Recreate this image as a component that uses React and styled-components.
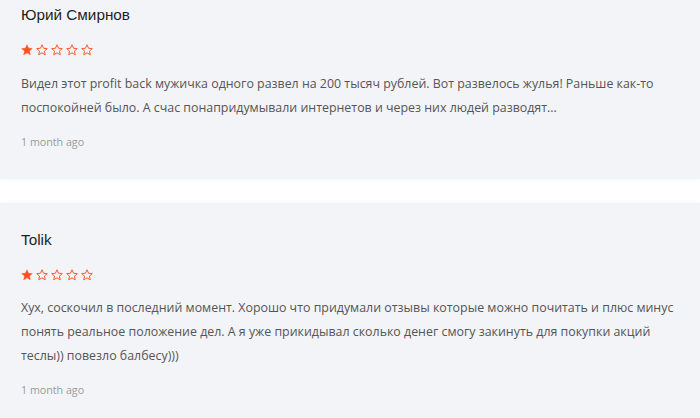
import React from "react";
import styled, { createGlobalStyle } from "styled-components";

const GlobalStyle = createGlobalStyle`
  html, body {
    margin: 0;
    padding: 0;
    background: #ffffff;
  }
  body {
    overflow: hidden;
  }
`;

const List = styled.div`
  display: flex;
  flex-direction: column;
  gap: 24px;
  margin-top: -22px;
`;

const Card = styled.article`
  background: #f3f4f8;
  box-shadow: 0 0 6px rgba(0, 0, 0, 0.05);
  padding: 25px 21px 29px;
  display: flex;
  flex-direction: column;
`;

const Name = styled.h3`
  margin: 0;
  font-family: "Liberation Sans", Arial, sans-serif;
  font-weight: 400;
  font-size: 15.3px;
  line-height: 24px;
  color: #1f1f1f;
`;

const Stars = styled.div`
  display: flex;
  gap: 3px;
  margin-top: 17px;
  height: 12px;
`;

const Text = styled.p`
  margin: 15.5px 0 0;
  font-family: "Open Sans", sans-serif;
  font-size: 12.4px;
  line-height: 24px;
  color: #555555;
`;

const Time = styled.span`
  margin-top: 14px;
  font-family: "Open Sans", sans-serif;
  font-size: 10.7px;
  line-height: 16px;
  color: #9a9a9a;
`;

const Star = ({ filled }) => (
  <svg width="12" height="12" viewBox="0 0 24 24">
    <path
      d="M12 1.5l3.1 7 7.5.7-5.7 5 1.7 7.4L12 17.7l-6.6 3.9 1.7-7.4-5.7-5 7.5-.7z"
      fill={filled ? "#ff4f1f" : "none"}
      stroke="#ff5a2c"
      strokeWidth={filled ? 1 : 2}
      strokeLinejoin="round"
    />
  </svg>
);

const Rating = ({ value }) => (
  <Stars>
    {[1, 2, 3, 4, 5].map((i) => (
      <Star key={i} filled={i <= value} />
    ))}
  </Stars>
);

const reviews = [
  {
    name: "Юрий Смирнов",
    rating: 1,
    text: "Видел этот profit back мужичка одного развел на 200 тысяч рублей. Вот развелось жулья! Раньше как-то поспокойней было. А счас понапридумывали интернетов и через них людей разводят...",
    time: "1 month ago",
  },
  {
    name: "Tolik",
    rating: 1,
    text: "Хух, соскочил в последний момент. Хорошо что придумали отзывы которые можно почитать и плюс минус понять реальное положение дел. А я уже прикидывал сколько денег смогу закинуть для покупки акций теслы)) повезло балбесу)))",
    time: "1 month ago",
  },
];

const App = () => (
  <>
    <GlobalStyle />
    <List>
      {reviews.map((r) => (
        <Card key={r.name}>
          <Name>{r.name}</Name>
          <Rating value={r.rating} />
          <Text>{r.text}</Text>
          <Time>{r.time}</Time>
        </Card>
      ))}
    </List>
  </>
);

export default App;
